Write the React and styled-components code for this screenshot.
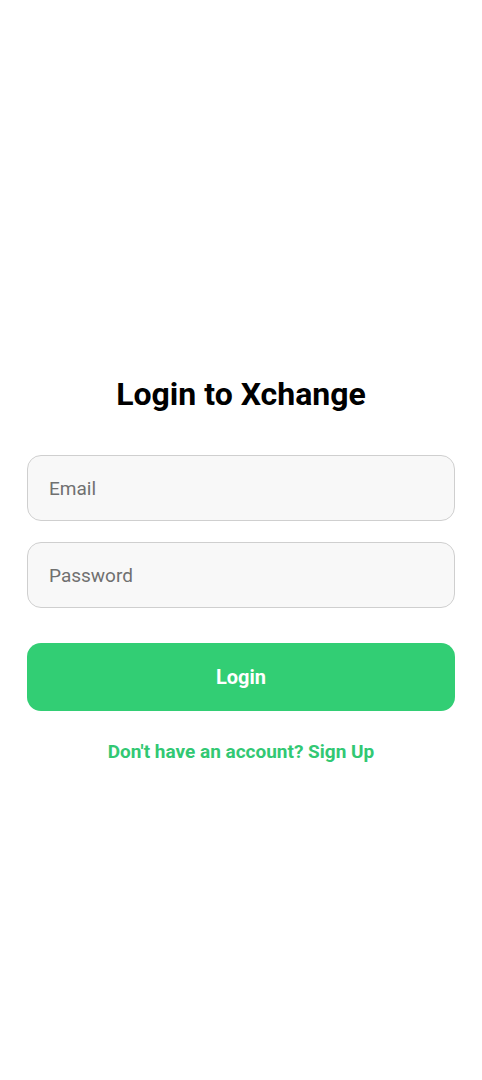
import React from 'react';
import styled, { createGlobalStyle } from 'styled-components';

const GlobalStyle = createGlobalStyle`
  body {
    margin: 0;
    background: #ffffff;
    font-family: Roboto, "Liberation Sans", sans-serif;
  }
`

const Screen = styled.div`
  min-height: 1080px;
  display: flex;
  flex-direction: column;
  padding: 374px 27px 0;
  box-sizing: border-box;
`

const Title = styled.h1`
  margin: 0 0 41px;
  text-align: center;
  font-size: 32px;
  line-height: 40px;
  font-weight: 700;
  color: #000;
`

const Field = styled.input`
  height: 66px;
  box-sizing: border-box;
  border: 1px solid #cfcfcf;
  border-radius: 14px;
  background: #f8f8f8;
  padding: 0 21px;
  font-family: inherit;
  font-size: 19px;
  color: #222;
  margin-bottom: ${p => p.last ? '35px' : '21px'};
  outline: none;

  &::placeholder {
    color: #707070;
  }
`

const Button = styled.button`
  height: 68px;
  border: none;
  border-radius: 14px;
  background: #32ce74;
  color: #fff;
  font-family: inherit;
  font-size: 20px;
  font-weight: 700;
  margin-bottom: 29px;
`

const SignUp = styled.a`
  text-align: center;
  color: #32c873;
  font-size: 19px;
  font-weight: 700;
  text-decoration: none;
`

function App () {
  return (
    <Screen>
      <GlobalStyle />
      <Title>Login to Xchange</Title>
      <Field placeholder='Email' />
      <Field placeholder='Password' type='password' last />
      <Button>Login</Button>
      <SignUp href='#'>Don't have an account? Sign Up</SignUp>
    </Screen>
  )
}

export default App;
